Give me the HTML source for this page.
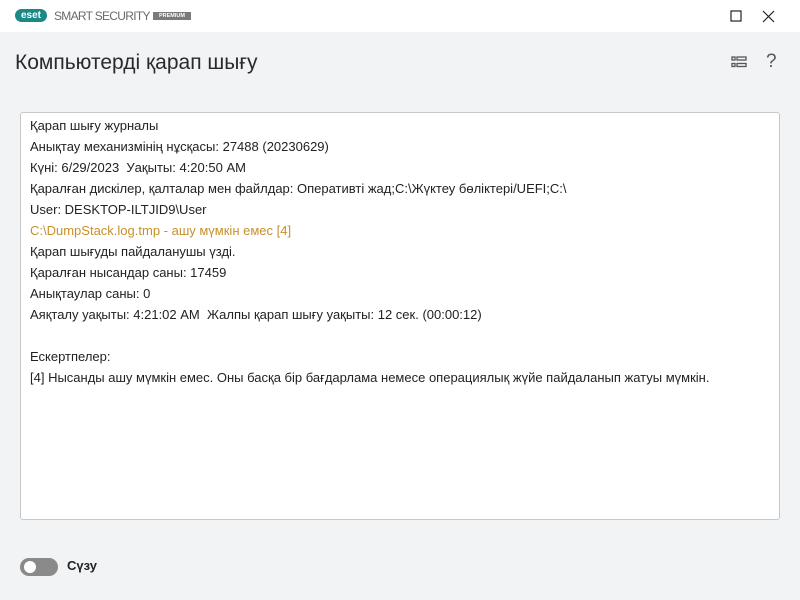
<!DOCTYPE html>
<html><head><meta charset="utf-8"><style>
*{margin:0;padding:0;box-sizing:border-box}
body{width:800px;height:600px;background:#f2f3f5;font-family:"Liberation Sans","DejaVu Sans",sans-serif;position:relative;overflow:hidden;color:#1f1f1f}
.tb{position:absolute;left:0;top:0;width:800px;height:32px;background:#fff}
.logo{position:absolute;left:15px;top:9px;width:32px;height:13px;background:#1a8a88;border-radius:7px;color:#fff;font-size:10px;font-weight:bold;text-align:center;line-height:13px}
.brand{position:absolute;left:54px;top:9px;font-size:12px;color:#6a6a6a;letter-spacing:-.7px}
.prem{position:absolute;left:153px;top:12px;width:38px;height:8px;background:#7a7a7a;color:#fff;font-size:5.5px;font-weight:bold;text-align:center;line-height:8px}
h1{position:absolute;left:15px;top:51px;font-size:21px;font-weight:normal;color:#2a2a2a}
.box{position:absolute;left:20px;top:112px;width:760px;height:408px;background:#fff;border:1px solid #c8c8c8;border-radius:3px;padding:2px 0 0 9px;font-size:13px;line-height:21px;color:#222}
.o{color:#c8902a}
.tg{position:absolute;left:20px;top:558px;width:38px;height:18px;border-radius:9px;background:#8a8a8a}
.tg:after{content:"";position:absolute;left:4px;top:3px;width:12px;height:12px;border-radius:50%;background:#fff}
.tl{position:absolute;left:67px;top:558px;font-size:13px;font-weight:bold;color:#222}
</style></head><body>
<div class="tb">
<div class="logo">eset</div>
<div class="brand">SMART SECURITY</div>
<div class="prem">PREMIUM</div>
<svg style="position:absolute;left:730px;top:10px" width="12" height="12"><rect x="1" y="1" width="10" height="10" fill="none" stroke="#222" stroke-width="1.2"/></svg>
<svg style="position:absolute;left:762px;top:10px" width="13" height="13"><path d="M1 1L12 12M12 1L1 12" stroke="#222" stroke-width="1.2"/></svg>
</div>
<h1>Компьютерді қарап шығу</h1>
<svg style="position:absolute;left:731px;top:56px" width="16" height="13"><g fill="none" stroke="#555" stroke-width="1.3"><rect x="1" y="1" width="3" height="3"/><rect x="1" y="7.5" width="3" height="3"/><rect x="6" y="1" width="9" height="3"/><rect x="6" y="7.5" width="9" height="3"/></g></svg>
<div style="position:absolute;left:766px;top:51px;font-size:19px;color:#555">?</div>
<div class="box">
Қарап шығу журналы<br>
Анықтау механизмінің нұсқасы: 27488 (20230629)<br>
Күні: 6/29/2023&nbsp; Уақыты: 4:20:50 AM<br>
Қаралған дискілер, қалталар мен файлдар: Оперативті жад;C:\Жүктеу бөліктері/UEFI;C:\<br>
User: DESKTOP-ILTJID9\User<br>
<span class="o">C:\DumpStack.log.tmp - ашу мүмкін емес [4]</span><br>
Қарап шығуды пайдаланушы үзді.<br>
Қаралған нысандар саны: 17459<br>
Анықтаулар саны: 0<br>
Аяқталу уақыты: 4:21:02 AM&nbsp; Жалпы қарап шығу уақыты: 12 сек. (00:00:12)<br>
<br>
Ескертпелер:<br>
[4] Нысанды ашу мүмкін емес. Оны басқа бір бағдарлама немесе операциялық жүйе пайдаланып жатуы мүмкін.
</div>
<div class="tg"></div>
<div class="tl">Сүзу</div>
</body></html>
